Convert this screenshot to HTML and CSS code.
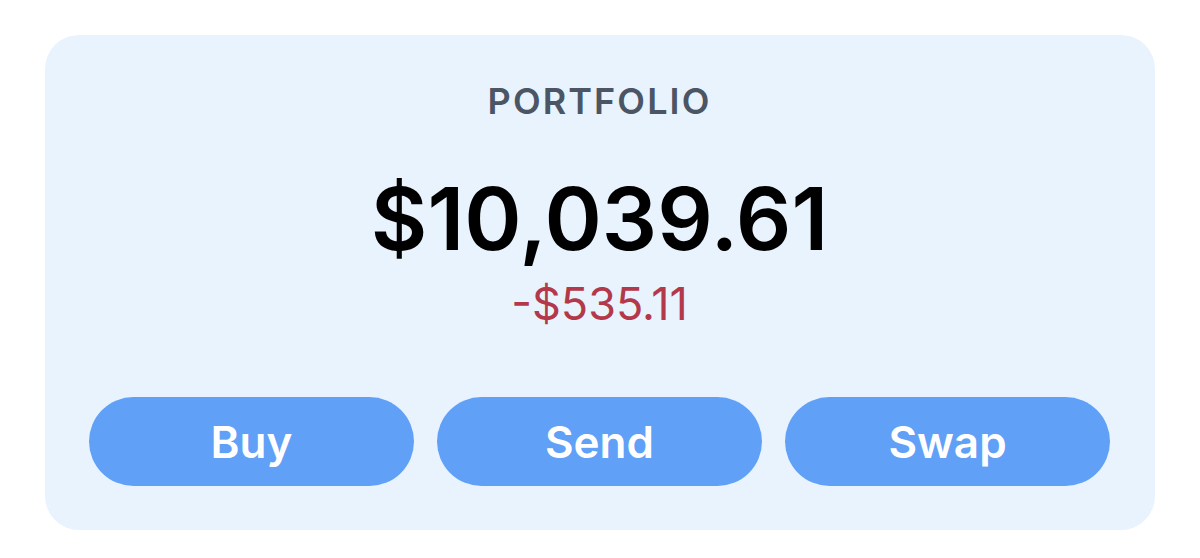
FILE: index.html
```html
<!DOCTYPE html>
<html lang="en">
  <head>
    <meta charset="UTF-8" />
    <meta name="viewport" content="width=device-width, initial-scale=1.0" />
    <title>Portfolio</title>
    <link rel="stylesheet" href="styles.css">
  </head>
  <body>
    <div class="portfolio-card">
      <h2 class="label">PORTFOLIO</h2>
      <div class="balance">$10,039.61</div>
      <div class="change">-$535.11</div>
      <div class="actions">
        <button class="action-btn">Buy</button>
        <button class="action-btn">Send</button>
        <button class="action-btn">Swap</button>
      </div>
    </div>
  </body>
</html>
```

FILE: styles.css
```css
body {
  margin: 0;
  padding: 35px 45px;
  background-color: #fff;
  font-family: Inter, "Noto Sans", Arial, sans-serif;
}

.portfolio-card {
  background-color: #e8f3fd;
  border-radius: 34px;
  padding: 48px 45px 44px 44px;
  display: flex;
  flex-direction: column;
  align-items: center;
}

.label {
  margin: 0;
  font-size: 36px;
  line-height: 36px;
  font-weight: 600;
  letter-spacing: 2.1px;
  color: #4b5563;
}

.balance {
  margin-top: 56px;
  font-size: 87px;
  line-height: 87px;
  font-weight: 600;
  color: #000;
}

.change {
  margin-top: 20px;
  font-size: 45px;
  line-height: 44px;
  color: #b3394a;
}

.actions {
  margin-top: 71px;
  width: 100%;
  display: flex;
  gap: 23px;
}

.action-btn {
  flex: 1;
  height: 89px;
  border: none;
  border-radius: 45px;
  background-color: #60a0f7;
  color: #fff;
  font-family: inherit;
  font-size: 44px;
  font-weight: 600;
  cursor: pointer;
}
```
